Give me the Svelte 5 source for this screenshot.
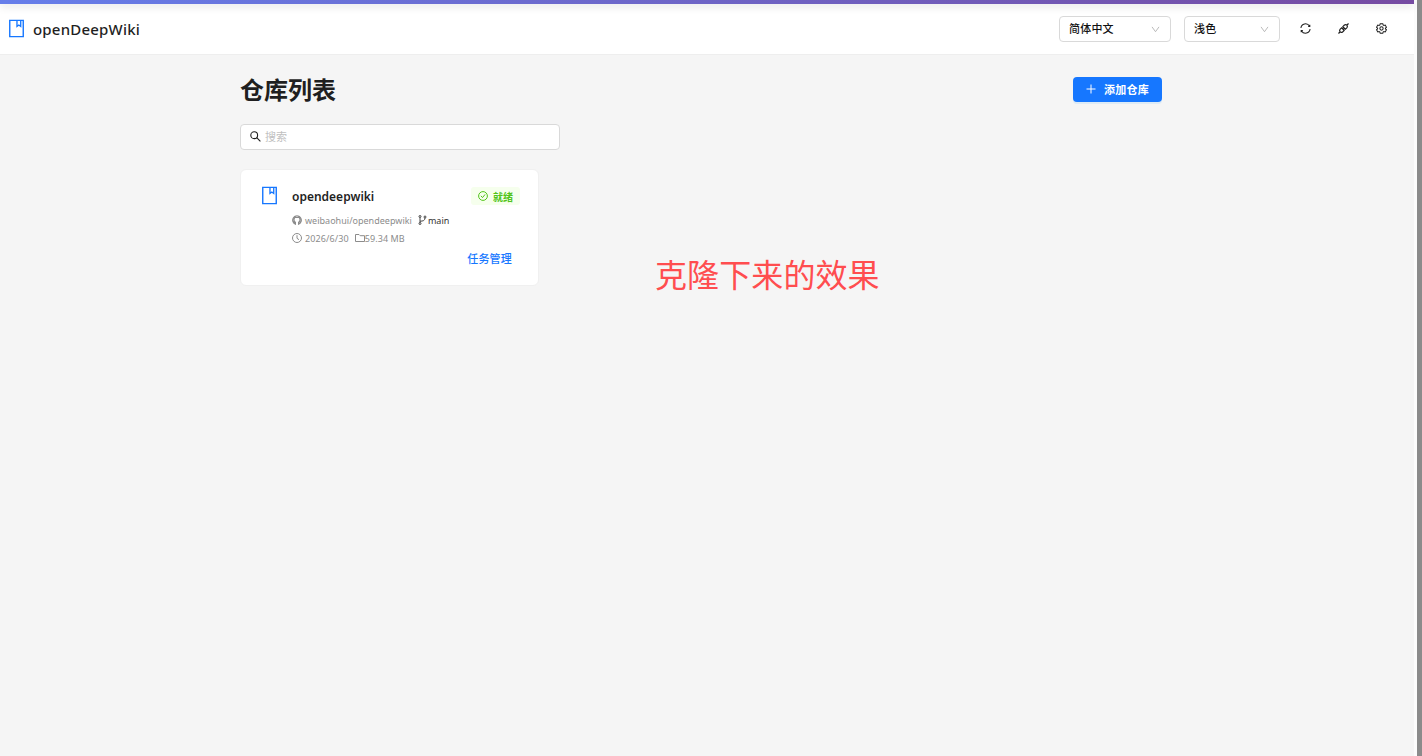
<script>
  const selects = [
    { label: '简体中文', size: 'wide' },
    { label: '浅色', size: 'narrow' },
  ];

  const repos = [
    {
      name: 'opendeepwiki',
      path: 'weibaohui/opendeepwiki',
      branch: 'main',
      date: '2026/6/30',
      size: '59.34 MB',
      status: '就绪',
    },
  ];

  let search = $state('');
</script>

{#snippet book()}
  <svg class="book" viewBox="0 0 16 19">
    <path d="M.8 .8H15.2V18.2H.8Z" />
    <path class="ribbon" d="M8.5 .8V7.3L10.5 5.8L12.5 7.3V.8" />
  </svg>
{/snippet}

<div class="window">
  <div class="page">
    <div class="accent"></div>

    <header>
      <div class="brand">
        {@render book()}
        <span>openDeepWiki</span>
      </div>
      <div class="tools">
        {#each selects as s}
          <button class="select {s.size}">
            <span>{s.label}</span>
            <svg class="chevron" viewBox="0 0 10 8"><path d="M1 1L5 6.5L9 1" /></svg>
          </button>
        {/each}
        <button class="icon-btn" aria-label="刷新">
          <svg viewBox="0 0 12 12">
            <path d="M1 5.4A5 5 0 0 1 10.3 3.4M11 6.6A5 5 0 0 1 1.7 8.6M10.7 2V3.8H8.9M1.3 10V8.2H3.1" />
          </svg>
        </button>
        <button class="icon-btn" aria-label="接口">
          <svg class="api" viewBox="0 0 12 12">
            <path d="M9.8 2.2L11.5 .5M2.2 9.8L.5 11.5M5.3 3.9L7 2.2A2 2 0 0 1 9.8 5L8.1 6.7ZM3.9 5.3L2.2 7A2 2 0 0 0 5 9.8L6.7 8.1ZM4.7 6.1L5.9 4.9M5.9 7.3L7.1 6.1" />
          </svg>
        </button>
        <button class="icon-btn" aria-label="设置">
          <svg viewBox="0 0 12 12">
            <path d="M4.6 .7H7.4L7.8 2.2L8.6 2.7L10.1 2.3L11.4 4.6L10.3 5.7V6.3L11.4 7.4L10.1 9.7L8.6 9.3L7.8 9.8L7.4 11.3H4.6L4.2 9.8L3.4 9.3L1.9 9.7L.6 7.4L1.7 6.3V5.7L.6 4.6L1.9 2.3L3.4 2.7L4.2 2.2Z" />
            <circle cx="6" cy="6" r="1.8" />
          </svg>
        </button>
      </div>
    </header>

    <main>
      <div class="title-row">
        <h1>仓库列表</h1>
        <button class="add">
          <svg viewBox="0 0 10 10"><path d="M5 .5V9.5M.5 5H9.5" /></svg>
          <span>添加仓库</span>
        </button>
      </div>

      <label class="search">
        <svg viewBox="0 0 11 11"><circle cx="4.2" cy="4.2" r="3.4" /><path d="M6.7 6.7L10.4 10.4" /></svg>
        <input placeholder="搜索" bind:value={search} />
      </label>

      <div class="grid">
        {#each repos as repo}
          <article class="card">
            {@render book()}
            <div class="body">
              <div class="card-head">
                <h2>{repo.name}</h2>
                <span class="tag">
                  <svg viewBox="0 0 10 10"><circle cx="5" cy="5" r="4.4" /><path d="M2.9 4.8L4.5 6.6L7.1 3.4" /></svg>
                  {repo.status}
                </span>
              </div>
              <div class="meta">
                <svg class="github" viewBox="0 0 10 10">
                  <path d="M3.4 9.1V7.4C2.3 6.8 2 5.9 2 4.8C2 4.2 2.2 3.6 2.5 3.2V1.9L3.9 2.5H6.1L7.5 1.9V3.2C7.8 3.6 8 4.2 8 4.8C8 5.9 7.7 6.8 6.6 7.4V9.1A4.3 4.3 0 1 0 3.4 9.1ZM1.7 7C2.3 7 2.3 8 3.4 7.9" />
                </svg>
                <span class="path">{repo.path}</span>
                <svg class="branch" viewBox="0 0 9 10">
                  <path d="M2 2.5V7.5M2 6.2C5 6.2 7 5.5 7 3" />
                  <circle cx="2" cy="1.5" r="1" /><circle cx="2" cy="8.5" r="1" /><circle cx="7" cy="2" r="1" />
                </svg>
                <span class="ref">{repo.branch}</span>
              </div>
              <div class="meta">
                <svg viewBox="0 0 10 10"><circle cx="5" cy="5" r="4.5" /><path d="M5 2.2V5.3L7 6.7" /></svg>
                <span class="date">{repo.date}</span>
                <svg class="folder" viewBox="0 0 10 8"><path d="M.5 .5H4L5.2 1.7H9.5V7.5H.5Z" /></svg>
                <span class="size">{repo.size}</span>
              </div>
              <div class="actions"><button>任务管理</button></div>
            </div>
          </article>
        {/each}
      </div>
    </main>

    <p class="note">克隆下来的效果</p>
  </div>
  <div class="edge"></div>
</div>

<style>
  :global(body) {
    margin: 0;
    overflow: hidden;
  }
  .window {
    display: flex;
    height: 756px;
    background: #fcfcfc;
    color: #1f1f1f;
    font-family: 'Noto Sans', 'Noto Sans CJK SC', sans-serif;
    font-size: 11px;
  }
  .page {
    position: relative;
    width: 1414px;
    background: #f5f5f5;
  }
  .edge {
    width: 5px;
    margin-left: 3px;
    background: #8b8b8b;
  }
  .accent {
    position: relative;
    height: 4px;
    background: linear-gradient(90deg, #667eea, #764ba2);
    box-shadow: 0 2px 8px rgba(0, 0, 0, 0.15);
  }

  button {
    padding: 0;
    border: 0;
    background: none;
    color: inherit;
    font: inherit;
  }
  svg {
    display: block;
    flex: none;
    fill: none;
    stroke: currentColor;
    stroke-width: 1;
  }
  .book {
    width: 15px;
    height: 19px;
    margin-right: 1px;
    color: #1677ff;
    stroke-width: 1.5;
  }
  .ribbon { stroke-width: 1.4; }

  header {
    box-sizing: border-box;
    display: flex;
    justify-content: space-between;
    align-items: center;
    height: 51px;
    padding: 0 26px 0 9px;
    border-bottom: 1px solid #eeeeee;
    background: #fff;
  }
  .brand {
    display: flex;
    align-items: center;
    gap: 8px;
    font-size: 15px;
    font-weight: 500;
    letter-spacing: 0.2px;
  }
  .brand .book { margin-bottom: 1px; }
  .tools {
    display: flex;
    align-items: center;
  }
  .select {
    box-sizing: border-box;
    display: flex;
    align-items: center;
    justify-content: space-between;
    height: 26px;
    margin-right: 13px;
    padding: 0 10px 0 9px;
    border: 1px solid #d9d9d9;
    border-radius: 4px;
    color: #111;
    font-weight: 500;
    letter-spacing: 0.2px;
  }
  .select span { padding-bottom: 2px; }
  .wide { width: 112px; }
  .narrow {
    width: 96px;
    margin-right: 20px;
  }
  .chevron {
    width: 9px;
    height: 7px;
    color: #b0b0b0;
  }
  .icon-btn + .icon-btn { margin-left: 26px; }
  .icon-btn svg {
    width: 11px;
    height: 11px;
    margin: 0 1px 1px 0;
    stroke-width: 1.1;
  }
  .icon-btn .api { stroke-width: 1.3; }

  main {
    width: 922px;
    padding: 22px 0 0 240px;
  }
  .title-row {
    display: flex;
    justify-content: space-between;
    height: 47px;
  }
  h1 {
    margin: 0;
    font-size: 24px;
    font-weight: 700;
    line-height: 25px;
  }
  .add {
    box-sizing: border-box;
    display: flex;
    align-items: center;
    justify-content: center;
    gap: 8px;
    width: 89px;
    height: 25px;
    padding-bottom: 2px;
    border-radius: 4px;
    background: #1677ff;
    box-shadow: 0 2px 0 rgba(5, 145, 255, 0.1);
    color: #fff;
    font-weight: 700;
    letter-spacing: 0.2px;
  }
  .add svg {
    width: 10px;
    height: 10px;
  }

  .search {
    box-sizing: border-box;
    display: flex;
    align-items: center;
    gap: 4px;
    width: 320px;
    height: 26px;
    padding: 0 9px 2px;
    border: 1px solid #d9d9d9;
    border-radius: 4px;
    background: #fff;
  }
  .search svg {
    width: 11px;
    height: 11px;
    stroke-width: 1.1;
  }
  input {
    flex: 1;
    min-width: 0;
    padding: 0;
    border: 0;
    outline: 0;
    background: none;
    font: inherit;
  }
  input::placeholder { color: #bfbfbf; }

  .grid {
    display: grid;
    grid-template-columns: 299px;
    padding-top: 19px;
  }
  .card {
    box-sizing: border-box;
    display: flex;
    gap: 14px;
    height: 117px;
    padding: 16px 18px 0 21px;
    border: 1px solid #f0f0f0;
    border-radius: 6px;
    background: #fff;
  }
  .body { flex: 1; }
  .card-head {
    display: flex;
    align-items: center;
    justify-content: space-between;
    height: 20px;
    margin-bottom: 5px;
  }
  h2 {
    margin: 0;
    font-size: 12px;
    font-weight: 600;
  }
  .tag {
    box-sizing: border-box;
    display: flex;
    align-items: center;
    gap: 5px;
    height: 18px;
    padding: 0 7px;
    border-radius: 3px;
    background: #f6ffed;
    color: #52c41a;
    font-size: 10px;
    font-weight: 700;
  }
  .tag svg {
    width: 10px;
    height: 10px;
  }
  .meta {
    display: flex;
    align-items: center;
    height: 18px;
    color: #8c8c8c;
    font-size: 9px;
    white-space: nowrap;
  }
  .meta svg {
    width: 10px;
    height: 10px;
    margin-right: 3px;
  }
  .meta .github { stroke-width: 1.2; }
  .meta .branch {
    width: 9px;
    margin: 0 1px 0 6px;
    color: #333;
    stroke-width: 0.9;
  }
  .meta .folder {
    height: 8px;
    margin: 0 0 0 6px;
  }
  .path { letter-spacing: 0.02px; }
  .date, .size { letter-spacing: 0.1px; }
  .ref { color: #333; }
  .actions {
    display: flex;
    justify-content: flex-end;
    padding: 2px 8px 0 0;
  }
  .actions button {
    color: #1677ff;
    font-weight: 500;
    line-height: 20px;
    letter-spacing: 0.2px;
  }

  .note {
    position: absolute;
    left: 655px;
    top: 251px;
    margin: 0;
    color: #ff4d4f;
    font-size: 32px;
    line-height: 48px;
    letter-spacing: 0.1px;
    white-space: nowrap;
  }
</style>
